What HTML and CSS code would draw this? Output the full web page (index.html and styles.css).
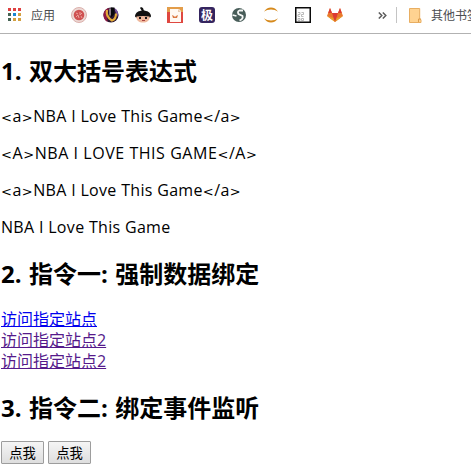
FILE: index.html
```html
<!DOCTYPE html>
<html lang="zh-CN">
<head>
<meta charset="utf-8">
<title>Vue</title>
<link rel="stylesheet" href="styles.css">
</head>
<body>
<nav class="bar">
  <svg class="apps" width="14" height="14" viewBox="0 0 14 14" shape-rendering="crispEdges"><path fill="#df4040" d="M0 0h3v3H0zM5 0h3v3H5zM10 0h3v3h-3z"/><path fill="#466454" d="M0 5h3v3H0zM0 10h3v3H0z"/><path fill="#1685d2" d="M5 5h3v3H5z"/><path fill="#d3a041" d="M10 5h3v3h-3zM5 10h3v3H5zM10 10h3v3h-3z"/></svg>
  <span class="label">应用</span>
  <div class="icons">
    <svg viewBox="0 0 16 16"><circle cx="8" cy="8" r="7.5" fill="#ecd8d4" stroke="#dbb0ac"/><circle cx="8" cy="8" r="5.3" fill="#cf5151"/><path d="M5 6l2 1M9 5v3l2-2M5 10l2-2 1 3M10 9l1 2" stroke="#eba09a" fill="none"/></svg>
    <svg viewBox="0 0 16 16"><circle cx="8" cy="8" r="7.5" fill="#2b1730"/><path d="M6 1C2 2 0 5 .5 9c.4 3 2 5 4 6L4 8z" fill="#8d1743"/><path d="M11 1c3 1 5 5 4 9l-2-4z" fill="#78529b"/><path d="M4 3C3 7 5 11 9 13.500c3-1 4-3 4-7" fill="none" stroke="#e4aa38" stroke-width="2.2"/><path d="M8 .5v10l3.500-3.500V.5z" fill="#08080b"/><path d="M7 1.500v7" stroke="#e9ddd5"/></svg>
    <svg viewBox="0 0 16 16"><path d="M7 4L5 1l1-1 2 1 1 3z" fill="#111"/><path d="M0 9.5C0 5.5 4 3.5 8 3.5s8 2 8 6l-1 1H1z" fill="#111"/><path d="M1.5 9.5q6.5-1 13 0c.5 4-2.5 6-6.5 6s-7-2-6.5-6z" fill="#efb89c"/><path d="M4 10h2v2H4zM10 10h2v2h-2z" fill="#19191c"/><path d="M7 13.5h3" stroke="#a94440"/></svg>
    <svg viewBox="0 0 16 16"><path d="M0 0h16v16H0z" fill="#df4740"/><path d="M0 0h16v5H0z" fill="#e39d4a"/><path d="M3 2h9l2 2v11H3z" fill="#fff9f2"/><path d="M11 2v3h3" fill="#e8c9ae"/><path d="M5 8l2 1 1 1 1-1 2-1-1 3H6z" fill="#db7942"/></svg>
    <svg viewBox="0 0 16 16"><rect width="16" height="16" rx="3" fill="#35255f"/><text class="ji" x="8" y="12.5" text-anchor="middle">极</text></svg>
    <svg viewBox="0 0 16 16"><circle cx="8" cy="8" r="7" fill="#485d59"/><path d="M12 3.5H8.500q-2.500 1-1 3.500l4 2q1 3-3 4.500M1.500 8l4 1" fill="none" stroke="#f5f7f6" stroke-width="1.8"/></svg>
    <svg viewBox="0 0 16 16"><path d="M1 4.8C4-.9 12-.9 15 4.8 11 1.8 5 1.8 1 4.8zM1 11.2c3 5.7 11 5.7 14 0-4 3-10 3-14 0z" fill="#d68a1d"/></svg>
    <svg viewBox="0 0 16 16"><path d="M.75.75h14.5v14.5H.75z" fill="#fff" stroke="#0b0b0b" stroke-width="1.5"/><path d="M3 5.500h2v2H3v2h2M6.500 5.500h2v2h-2v2h2M3 11.500h2v2H3zM6.500 11.500h2v2h-2z" fill="none" stroke="#aaa" stroke-width=".8"/></svg>
    <svg viewBox="0 0 16 16"><path d="M3 1L0 9l8 6 8-6-3-8-2 5H5z" fill="#e9782d"/><path d="M3 1L1.2 6H5zM13 1l1.8 5H11zM5 6h6l-3 9z" fill="#db3b33"/><path d="M0 9l8 6-2-4zM16 9l-8 6 2-4z" fill="#e6a42d"/></svg>
  </div>
  <svg class="more" width="9" height="7" viewBox="0 0 9 7"><path d="M.8.5l3 3-3 3M4.8.5l3 3-3 3" fill="none" stroke="#5c5c5c" stroke-width="1.5"/></svg>
  <i class="sep"></i>
  <svg class="folder" width="13" height="15" viewBox="0 0 13 15"><path d="M.5.5h10.2v10.700l1.300.5v2.800H.5z" fill="#ffd391" stroke="#e8ae62"/><path d="M9.500 14v-3H12" fill="none" stroke="#dd9d4d"/></svg>
  <span class="label">其他书签</span>
</nav>
<main class="page">
  <h2>1. 双大括号表达式</h2>
  <p><b>&lt;</b>a<b>&gt;</b>NBA I Love This Game<b>&lt;</b>/a<b>&gt;</b></p>
  <p class="upper"><b>&lt;</b>A<b>&gt;</b>NBA I LOVE THIS GAME<b>&lt;</b>/A<b>&gt;</b></p>
  <p><b>&lt;</b>a<b>&gt;</b>NBA I Love This Game<b>&lt;</b>/a<b>&gt;</b></p>
  <p>NBA I Love This Game</p>
  <h2>2. 指令一: 强制数据绑定</h2>
  <div class="links">
    <a class="new" href="#a">访问指定站点</a>
    <a href="#b">访问指定站点2</a>
    <a href="#c">访问指定站点2</a>
  </div>
  <h2>3. 指令二: 绑定事件监听</h2>
  <div class="buttons"><button>点我</button><button>点我</button></div>
</main>
</body>
</html>
```
FILE: styles.css
```css
body {
  margin: 0;
  overflow: hidden;
  background: #fff;
  color: #000;
  font: 16px/21px "Open Sans", "Noto Sans CJK SC", sans-serif;
}
.bar {
  display: flex;
  align-items: center;
  box-sizing: border-box;
  width: 100%;
  height: 34px;
  padding: 0 0 3px 8px;
  overflow: hidden;
  border-bottom: 1px solid #b2b2b2;
}
.bar svg { flex: none; }
.apps { margin-right: 9px; }
.label {
  flex: none;
  padding-top: 2px;
  color: #4b4d50;
  font-size: 12px;
  line-height: 20px;
  white-space: nowrap;
}
.icons {
  display: flex;
  flex: none;
  gap: 16px;
  margin-left: 16px;
}
.icons svg { width: 16px; height: 16px; }
.ji { fill: #fff; font-size: 12px; font-weight: 700; }
.more { margin-left: 35px; }
.sep {
  flex: none;
  width: 1px;
  height: 16px;
  margin: 0 12px 0 9px;
  background: #c4c4c4;
}
.folder { margin-right: 9px; }
.page { padding: 0 1px; }
h2 {
  margin: 20px 0 19px;
  font-size: 24px;
  line-height: 32px;
  white-space: nowrap;
  word-spacing: 1.2px;
}
h2:first-child { margin-top: 21px; }
p {
  margin: 16px 0;
  letter-spacing: 0.32px;
  white-space: nowrap;
}
.upper { letter-spacing: 0.55px; }
p b {
  font: 13px/1 "DejaVu Sans", sans-serif;
  letter-spacing: 0.6px;
}
.links { display: flex; flex-direction: column; align-items: flex-start; }
.links a {
  color: #551a8b;
  text-decoration: underline;
}
.links .new { color: #0000ee; }
.links + h2 { margin-bottom: 17px; }
.buttons { display: flex; gap: 4px; }
button {
  width: 43px;
  height: 23px;
  padding: 0;
  border: 1px solid #9d9d9d;
  border-radius: 1px;
  background: linear-gradient(#f5f5f5, #dedede);
  color: #000;
  font: 13.33px/19px "Noto Sans CJK SC", sans-serif;
}
```
